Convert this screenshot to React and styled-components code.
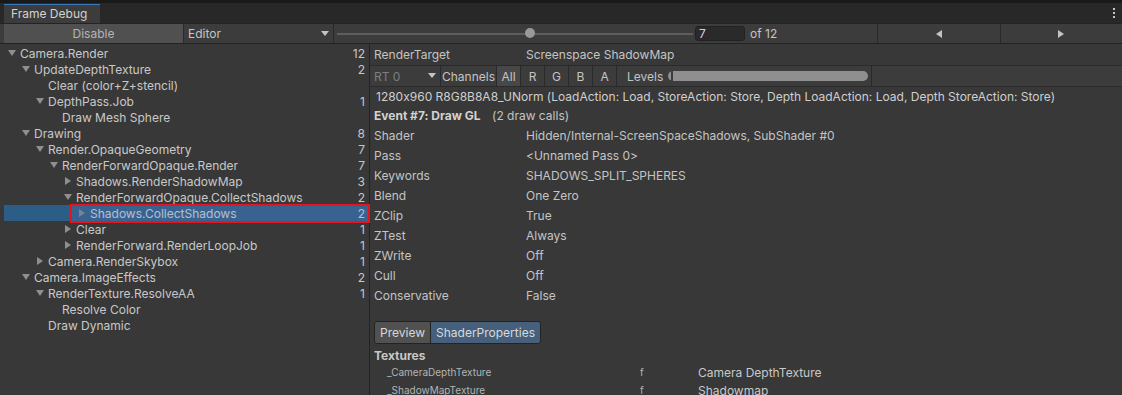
import React from 'react';
import styled, {createGlobalStyle, css} from 'styled-components';

const GlobalStyle = createGlobalStyle`
  html, body {
    margin: 0;
    padding: 0;
    background: #383838;
  }
  body {
    font-family: Inter, "Noto Sans", sans-serif;
    font-size: 12px;
    font-feature-settings: "calt" 0;
    color: #c4c4c4;
  }
`;

const Window = styled.div`
  width: 1122px;
  height: 395px;
  overflow: hidden;
  display: flex;
  flex-direction: column;
  background: #383838;
`;

const TabStrip = styled.div`
  height: 23px;
  background: #282828;
  border-top: 3px solid #191919;
  box-sizing: border-box;
  display: flex;
  align-items: flex-end;
  padding-left: 4px;
  position: relative;
`;

const Tab = styled.div`
  height: 19px;
  width: 96px;
  box-sizing: border-box;
  background: #3c3c3c;
  border-top: 1px solid #3a79bb;
  padding-left: 7px;
  line-height: 18px;
  color: #d2d2d2;
`;

const Kebab = styled.div`
  position: absolute;
  right: 7px;
  top: 5px;
  display: flex;
  flex-direction: column;
  gap: 2px;

  span {
    width: 2px;
    height: 2px;
    background: #c4c4c4;
  }
`;

const Toolbar = styled.div`
  height: 21px;
  display: flex;
  background: #3c3c3c;
  border-top: 1px solid #232323;
  border-bottom: 1px solid #232323;
  box-sizing: border-box;
  padding-left: 4px;
`;

const DisableButton = styled.div`
  width: 179px;
  background: #505050;
  color: #b4b4b4;
  text-align: center;
  line-height: 19px;
  border-right: 1px solid #2a2a2a;
`;

const Dropdown = styled.div`
  width: ${p => p.w || 150}px;
  box-sizing: border-box;
  display: flex;
  align-items: center;
  justify-content: space-between;
  padding: 0 4px 0 4px;
  border-right: 1px solid #2a2a2a;
  color: ${p => p.disabled ? '#7e7e7e' : '#c4c4c4'};
`;

const DownArrow = () => (
    <svg width="8" height="6" viewBox="0 0 8 6">
        <polygon points="0,0 8,0 4,5" fill="#c4c4c4"/>
    </svg>
);

const SliderArea = styled.div`
  width: 356px;
  position: relative;
  display: flex;
  align-items: center;
  padding-left: 3px;
`;

const Track = styled.div`
  width: 100%;
  height: 2px;
  background: #5e5e5e;
`;

const Thumb = styled.div`
  position: absolute;
  top: 4px;
  width: 10px;
  height: 10px;
  margin-left: -5px;
  border-radius: 50%;
  background: #999;
`;

const NumberField = styled.div`
  width: 50px;
  margin: 2px 0 2px 2px;
  box-sizing: border-box;
  background: #2a2a2a;
  border: 1px solid #212121;
  border-radius: 3px;
  padding-left: 3px;
  line-height: 14px;
  color: #d2d2d2;
`;

const OfLabel = styled.div`
  width: 132px;
  padding-left: 5px;
  line-height: 19px;
  box-sizing: border-box;
`;

const StepButton = styled.div`
  flex: 1;
  display: flex;
  align-items: center;
  justify-content: center;
  border-left: 1px solid #2a2a2a;
`;

const Main = styled.div`
  flex: 1;
  display: flex;
  min-height: 0;
`;

const TreePanel = styled.div`
  width: 369px;
  flex-shrink: 0;
  border-right: 1px solid #232323;
  padding-top: 1px;
`;

const TreeRow = styled.div`
  height: 16px;
  display: flex;
  align-items: center;
  margin-left: 4px;
  padding-right: 4px;
  position: relative;
  color: #c8c8c8;

  ${p => p.selected && css`
    background: #2c5d87;
    color: #e8e8e8;
  `}
`;

const Indent = styled.div`
  width: ${p => p.depth * 14 + 4}px;
  flex-shrink: 0;
`;

const Fold = styled.div`
  width: 12px;
  flex-shrink: 0;
  display: flex;
  align-items: center;
`;

const Label = styled.div`
  flex: 1;
  white-space: nowrap;
`;

const Count = styled.div`
  text-align: right;
`;

const Highlight = styled.div`
  position: absolute;
  left: 66px;
  top: -1px;
  right: -1px;
  bottom: -2px;
  border: 2px solid #e3151e;
  background: rgba(80, 110, 160, 0.35);
`;

const Caret = ({open}) => (
    <svg width="8" height="8" viewBox="0 0 8 8">
        {open
            ? <polygon points="0,1 8,1 4,7" fill="#8f8f8f"/>
            : <polygon points="1,0 7,4 1,8" fill="#8f8f8f"/>}
    </svg>
);

const Details = styled.div`
  flex: 1;
  display: flex;
  flex-direction: column;
  min-width: 0;

  & > * {
    flex-shrink: 0;
  }
`;

const TargetRow = styled.div`
  height: 22px;
  display: flex;
  align-items: center;
  padding-left: 4px;
  border-bottom: 1px solid #2a2a2a;
  box-sizing: border-box;
`;

const KeyCell = styled.div`
  width: 152px;
  flex-shrink: 0;
  white-space: nowrap;
`;

const ChannelBar = styled.div`
  height: 21px;
  display: flex;
  background: #3c3c3c;
  border-bottom: 1px solid #2a2a2a;
  box-sizing: border-box;
`;

const ChannelCell = styled.div`
  display: flex;
  align-items: center;
  justify-content: center;
  width: ${p => p.w ? `${p.w}px` : 'auto'};
  padding: 0 ${p => p.pad ?? 0}px;
  border-right: 1px solid #2a2a2a;
  ${p => p.active && css`background: #484848;`}
`;

const LevelsCell = styled.div`
  display: flex;
  align-items: center;
  gap: 5px;
  padding: 0 3px 0 10px;
  border-right: 1px solid #2a2a2a;
`;

const LevelsBar = styled.div`
  width: 200px;
  height: 10px;
  border-radius: 5px;
  background: #8f8f8f;
  position: relative;

  &::before {
    content: '';
    position: absolute;
    left: 3px;
    top: 0;
    bottom: 0;
    width: 2px;
    background: #3c3c3c;
  }
`;

const FormatLine = styled.div`
  padding: 1px 0 0 6px;
  height: 18px;
  line-height: 18px;
  color: #cfcfcf;
  white-space: nowrap;
`;

const EventLine = styled.div`
  display: flex;
  padding-left: 4px;
  height: 18px;
  align-items: center;

  b {
    color: #d2d2d2;
    font-weight: 700;
    width: 118px;
  }
`;

const PropRow = styled.div`
  height: 20px;
  display: flex;
  align-items: center;
  padding-left: 4px;
`;

const Tabs = styled.div`
  display: flex;
  margin: 16px 0 0 4px;
  height: 21px;
  width: fit-content;
  border: 1px solid #232323;
  border-radius: 3px;
  overflow: hidden;
`;

const TabButton = styled.div`
  padding: 0 5px;
  line-height: 21px;
  color: #d8d8d8;
  background: ${p => p.active ? '#46607c' : '#515151'};
  border-left: ${p => p.active ? '1px solid #232323' : 'none'};
`;

const SectionTitle = styled.div`
  padding: 5px 0 0 4px;
  font-weight: 700;
  color: #c8c8c8;
  line-height: 14px;
`;

const TexRow = styled.div`
  display: grid;
  grid-template-columns: 253px 58px auto;
  padding-left: 17px;
  height: 18px;
  align-items: center;
  font-size: 10px;
  color: #b4b4b4;

  span:last-child {
    font-size: 12px;
    color: #c8c8c8;
  }
`;

const tree = [
    {d: 0, label: 'Camera.Render', count: 12, fold: 'open'},
    {d: 1, label: 'UpdateDepthTexture', count: 2, fold: 'open'},
    {d: 2, label: 'Clear (color+Z+stencil)'},
    {d: 2, label: 'DepthPass.Job', count: 1, fold: 'open'},
    {d: 3, label: 'Draw Mesh Sphere'},
    {d: 1, label: 'Drawing', count: 8, fold: 'open'},
    {d: 2, label: 'Render.OpaqueGeometry', count: 7, fold: 'open'},
    {d: 3, label: 'RenderForwardOpaque.Render', count: 7, fold: 'open'},
    {d: 4, label: 'Shadows.RenderShadowMap', count: 3, fold: 'closed'},
    {d: 4, label: 'RenderForwardOpaque.CollectShadows', count: 2, fold: 'open'},
    {d: 5, label: 'Shadows.CollectShadows', count: 2, fold: 'closed', selected: true},
    {d: 4, label: 'Clear', count: 1, fold: 'closed'},
    {d: 4, label: 'RenderForward.RenderLoopJob', count: 1, fold: 'closed'},
    {d: 2, label: 'Camera.RenderSkybox', count: 1, fold: 'closed'},
    {d: 1, label: 'Camera.ImageEffects', count: 2, fold: 'open'},
    {d: 2, label: 'RenderTexture.ResolveAA', count: 1, fold: 'open'},
    {d: 3, label: 'Resolve Color'},
    {d: 2, label: 'Draw Dynamic'},
];

const props = [
    ['Shader', 'Hidden/Internal-ScreenSpaceShadows, SubShader #0'],
    ['Pass', '<Unnamed Pass 0>'],
    ['Keywords', 'SHADOWS_SPLIT_SPHERES'],
    ['Blend', 'One Zero'],
    ['ZClip', 'True'],
    ['ZTest', 'Always'],
    ['ZWrite', 'Off'],
    ['Cull', 'Off'],
    ['Conservative', 'False'],
];

const current = 7;
const total = 12;

export default function App() {
    return (
        <Window>
            <GlobalStyle/>
            <TabStrip>
                <Tab>Frame Debug</Tab>
                <Kebab><span/><span/><span/></Kebab>
            </TabStrip>
            <Toolbar>
                <DisableButton>Disable</DisableButton>
                <Dropdown>Editor<DownArrow/></Dropdown>
                <SliderArea>
                    <Track/>
                    <Thumb style={{left: `${((current - 1) / (total - 1)) * 100}%`}}/>
                </SliderArea>
                <NumberField>{current}</NumberField>
                <OfLabel>of {total}</OfLabel>
                <StepButton>
                    <svg width="6" height="8" viewBox="0 0 6 8"><polygon points="6,0 6,8 0,4" fill="#c4c4c4"/></svg>
                </StepButton>
                <StepButton>
                    <svg width="6" height="8" viewBox="0 0 6 8"><polygon points="0,0 0,8 6,4" fill="#c4c4c4"/></svg>
                </StepButton>
            </Toolbar>
            <Main>
                <TreePanel>
                    {tree.map((n, i) => (
                        <TreeRow key={i} selected={n.selected}>
                            <Indent depth={n.d}/>
                            <Fold>{n.fold && <Caret open={n.fold === 'open'}/>}</Fold>
                            <Label>{n.label}</Label>
                            <Count>{n.count}</Count>
                            {n.selected && <Highlight/>}
                        </TreeRow>
                    ))}
                </TreePanel>
                <Details>
                    <TargetRow>
                        <KeyCell>RenderTarget</KeyCell>
                        <span>Screenspace ShadowMap</span>
                    </TargetRow>
                    <ChannelBar>
                        <Dropdown disabled w={71}>RT 0<DownArrow/></Dropdown>
                        <ChannelCell pad={1}>Channels</ChannelCell>
                        <ChannelCell active w={23}>All</ChannelCell>
                        <ChannelCell w={23}>R</ChannelCell>
                        <ChannelCell w={23}>G</ChannelCell>
                        <ChannelCell w={23}>B</ChannelCell>
                        <ChannelCell w={23}>A</ChannelCell>
                        <LevelsCell>Levels<LevelsBar/></LevelsCell>
                    </ChannelBar>
                    <FormatLine>
                        1280x960 R8G8B8A8_UNorm (LoadAction: Load, StoreAction: Store, Depth LoadAction: Load, Depth StoreAction: Store)
                    </FormatLine>
                    <EventLine>
                        <b>Event #7: Draw GL</b>
                        <span>(2 draw calls)</span>
                    </EventLine>
                    <div style={{height: 1}}/>
                    {props.map(([k, v]) => (
                        <PropRow key={k}>
                            <KeyCell>{k}</KeyCell>
                            <span>{v}</span>
                        </PropRow>
                    ))}
                    <Tabs>
                        <TabButton>Preview</TabButton>
                        <TabButton active>ShaderProperties</TabButton>
                    </Tabs>
                    <SectionTitle>Textures</SectionTitle>
                    <TexRow>
                        <span>_CameraDepthTexture</span>
                        <span>f</span>
                        <span>Camera DepthTexture</span>
                    </TexRow>
                    <TexRow>
                        <span>_ShadowMapTexture</span>
                        <span>f</span>
                        <span>Shadowmap</span>
                    </TexRow>
                </Details>
            </Main>
        </Window>
    );
}
